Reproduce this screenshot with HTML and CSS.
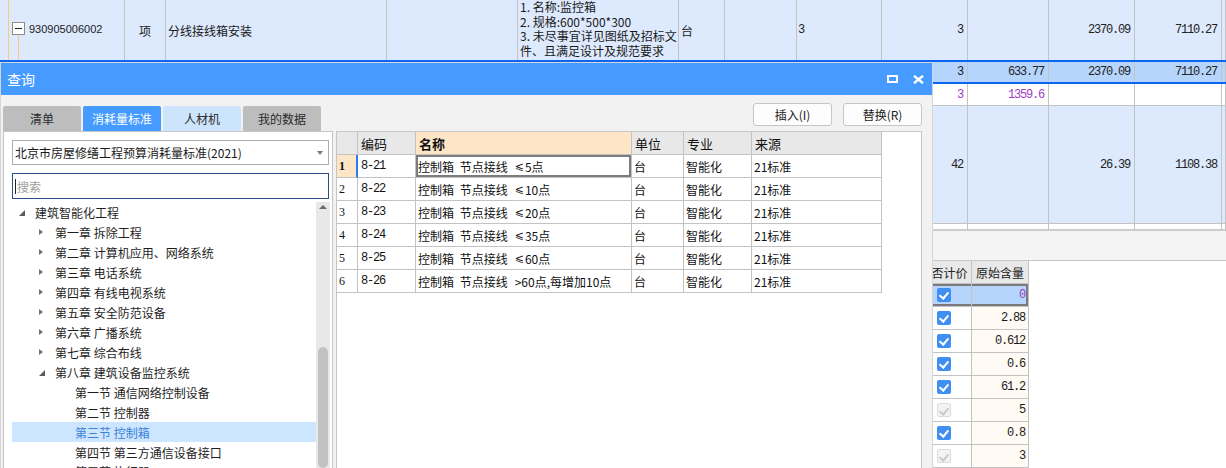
FILE: index.html
```html
<!DOCTYPE html>
<html lang="zh-CN">
<head>
<meta charset="utf-8">
<title>查询</title>
<link rel="stylesheet" href="styles.css">
</head>
<body>
<div class="app">
  <div class="mgrid">
    <div class="mrow r1">
      <div class="c c-tree"><span class="tbox"><span class="minus"></span></span><span class="code">930905006002</span></div>
      <div class="c c-center">项</div>
      <div class="c c-text">分线接线箱安装</div>
      <div class="c"></div>
      <div class="c c-desc"><div class="dl">1. 名称:监控箱</div><div class="dl">2. 规格:600*500*300</div><div class="dl">3. 未尽事宜详见图纸及招标文</div><div class="dl">件、且满足设计及规范要求</div></div>
      <div class="c c-text">台</div>
      <div class="c"></div>
      <div class="c nl">3</div>
      <div class="c n">3</div>
      <div class="c"></div>
      <div class="c n">2370.09</div>
      <div class="c n">7110.27</div>
      <div class="c"></div>
    </div>
    <div class="mrow r2">
      <div class="c"></div><div class="c"></div><div class="c"></div><div class="c"></div><div class="c"></div><div class="c"></div><div class="c"></div><div class="c"></div>
      <div class="c n">3</div>
      <div class="c n">633.77</div>
      <div class="c n">2370.09</div>
      <div class="c n">7110.27</div>
      <div class="c"></div>
    </div>
    <div class="mrow r3">
      <div class="c"></div><div class="c"></div><div class="c"></div><div class="c"></div><div class="c"></div><div class="c"></div><div class="c"></div><div class="c"></div>
      <div class="c n purple">3</div>
      <div class="c n purple">1359.6</div>
      <div class="c"></div>
      <div class="c"></div>
      <div class="c"></div>
    </div>
    <div class="mrow r4">
      <div class="c"></div><div class="c"></div><div class="c"></div><div class="c"></div><div class="c"></div><div class="c"></div><div class="c"></div><div class="c"></div>
      <div class="c n">42</div>
      <div class="c"></div>
      <div class="c n">26.39</div>
      <div class="c n">1108.38</div>
      <div class="c"></div>
    </div>
    <div class="mrow stub">
      <div class="c"></div><div class="c"></div><div class="c"></div><div class="c"></div><div class="c"></div><div class="c"></div><div class="c"></div><div class="c"></div><div class="c"></div><div class="c"></div><div class="c"></div><div class="c"></div><div class="c"></div>
    </div>
  </div>
  <div class="band"></div>
  <div class="sgrid">
    <div class="srow shead">
      <div class="s s0"></div>
      <div class="s s1">是否计价</div>
      <div class="s s2">原始含量</div>
      <div class="s s3"></div>
    </div>
    <div class="srow ssel">
      <div class="s s0"></div>
      <div class="s s1"><span class="cb on"></span></div>
      <div class="s s2 purple">0</div>
      <div class="s s3"></div>
    </div>
    <div class="srow">
      <div class="s s0"></div>
      <div class="s s1"><span class="cb on"></span></div>
      <div class="s s2">2.88</div>
      <div class="s s3"></div>
    </div>
    <div class="srow">
      <div class="s s0"></div>
      <div class="s s1"><span class="cb on"></span></div>
      <div class="s s2">0.612</div>
      <div class="s s3"></div>
    </div>
    <div class="srow">
      <div class="s s0"></div>
      <div class="s s1"><span class="cb on"></span></div>
      <div class="s s2">0.6</div>
      <div class="s s3"></div>
    </div>
    <div class="srow">
      <div class="s s0"></div>
      <div class="s s1"><span class="cb on"></span></div>
      <div class="s s2">61.2</div>
      <div class="s s3"></div>
    </div>
    <div class="srow">
      <div class="s s0"></div>
      <div class="s s1"><span class="cb off"></span></div>
      <div class="s s2">5</div>
      <div class="s s3"></div>
    </div>
    <div class="srow">
      <div class="s s0"></div>
      <div class="s s1"><span class="cb on"></span></div>
      <div class="s s2">0.8</div>
      <div class="s s3"></div>
    </div>
    <div class="srow">
      <div class="s s0"></div>
      <div class="s s1"><span class="cb off"></span></div>
      <div class="s s2">3</div>
      <div class="s s3"></div>
    </div>
  </div>
</div>

<div class="dialog">
  <div class="dlg-title">
    <span class="dlg-name">查询</span>
    <div class="dlg-ctrls">
      <svg class="ico-max" width="11" height="8" viewBox="0 0 11 8"><rect x="1" y="1" width="9" height="6" fill="none" stroke="#fff" stroke-width="2"/></svg>
      <svg class="ico-close" width="11" height="9" viewBox="0 0 11 9"><path d="M1 0.8 L10 8.2 M10 0.8 L1 8.2" stroke="#fff" stroke-width="2.4" fill="none"/></svg>
    </div>
  </div>
  <div class="dlg-body">
    <div class="lcol">
      <div class="tabs">
        <div class="tab">清单</div>
        <div class="tab active">消耗量标准</div>
        <div class="tab light">人材机</div>
        <div class="tab">我的数据</div>
      </div>
      <div class="lpanel">
        <div class="select"><span>北京市房屋修缮工程预算消耗量标准(2021)</span><i class="caret"></i></div>
        <div class="search"><span class="cursor"></span><span class="ph">搜索</span></div>
        <div class="tree-wrap">
          <div class="tree">
            <div class="node lv0"><span class="tg exp"></span>建筑智能化工程</div>
            <div class="node lv1"><span class="tg col"></span>第一章 拆除工程</div>
            <div class="node lv1"><span class="tg col"></span>第二章 计算机应用、网络系统</div>
            <div class="node lv1"><span class="tg col"></span>第三章 电话系统</div>
            <div class="node lv1"><span class="tg col"></span>第四章 有线电视系统</div>
            <div class="node lv1"><span class="tg col"></span>第五章 安全防范设备</div>
            <div class="node lv1"><span class="tg col"></span>第六章 广播系统</div>
            <div class="node lv1"><span class="tg col"></span>第七章 综合布线</div>
            <div class="node lv1"><span class="tg exp"></span>第八章 建筑设备监控系统</div>
            <div class="node lv2"><span class="tg"></span>第一节 通信网络控制设备</div>
            <div class="node lv2"><span class="tg"></span>第二节 控制器</div>
            <div class="node lv2 sel"><span class="tg"></span>第三节 控制箱</div>
            <div class="node lv2"><span class="tg"></span>第四节 第三方通信设备接口</div>
            <div class="node lv2 last"><span class="tg"></span>第五节 执行器</div>
          </div>
          <div class="vscroll"><span class="up"></span><span class="thumb"></span></div>
        </div>
      </div>
    </div>
    <div class="rcol">
      <div class="btns">
        <button class="btn">插入(I)</button>
        <button class="btn">替换(R)</button>
      </div>
      <div class="rpanel">
        <div class="qgrid">
          <div class="qrow qhead">
            <div class="q qn"></div>
            <div class="q">编码</div>
            <div class="q qsort">名称</div>
            <div class="q">单位</div>
            <div class="q">专业</div>
            <div class="q">来源</div>
          </div>
          <div class="qrow qcur">
            <div class="q qn">1</div>
            <div class="q qc">8-21</div>
            <div class="q qname qfocus">控制箱 节点接线<span class="le">⩽</span>5点</div>
            <div class="q">台</div>
            <div class="q">智能化</div>
            <div class="q">21标准</div>
          </div>
          <div class="qrow">
            <div class="q qn">2</div>
            <div class="q qc">8-22</div>
            <div class="q qname">控制箱 节点接线<span class="le">⩽</span>10点</div>
            <div class="q">台</div>
            <div class="q">智能化</div>
            <div class="q">21标准</div>
          </div>
          <div class="qrow">
            <div class="q qn">3</div>
            <div class="q qc">8-23</div>
            <div class="q qname">控制箱 节点接线<span class="le">⩽</span>20点</div>
            <div class="q">台</div>
            <div class="q">智能化</div>
            <div class="q">21标准</div>
          </div>
          <div class="qrow">
            <div class="q qn">4</div>
            <div class="q qc">8-24</div>
            <div class="q qname">控制箱 节点接线<span class="le">⩽</span>35点</div>
            <div class="q">台</div>
            <div class="q">智能化</div>
            <div class="q">21标准</div>
          </div>
          <div class="qrow">
            <div class="q qn">5</div>
            <div class="q qc">8-25</div>
            <div class="q qname">控制箱 节点接线<span class="le">⩽</span>60点</div>
            <div class="q">台</div>
            <div class="q">智能化</div>
            <div class="q">21标准</div>
          </div>
          <div class="qrow">
            <div class="q qn">6</div>
            <div class="q qc">8-26</div>
            <div class="q qname">控制箱 节点接线<span class="gt">&gt;60点,每增加10点</span></div>
            <div class="q">台</div>
            <div class="q">智能化</div>
            <div class="q">21标准</div>
          </div>
        </div>
      </div>
    </div>
  </div>
</div>
</body>
</html>
```

FILE: styles.css
```css
* { box-sizing: border-box; }
html, body { margin: 0; padding: 0; }
body {
  width: 1226px;
  height: 468px;
  overflow: hidden;
  position: relative;
  background: #fff;
  font-family: "Noto Sans CJK SC", "Liberation Sans", sans-serif;
  font-size: 12px;
  color: #1a1a1a;
}

/* ---------- background main grid ---------- */
.mrow {
  display: grid;
  grid-template-columns: 125px 41px 221px 131px 161px 46px 72px 85px 86px 81px 86px 87px 1fr;
}
.c {
  border-right: 1px solid #c3c3c3;
  display: flex;
  align-items: center;
  white-space: nowrap;
  overflow: hidden;
}
.r1 { height: 60px; background: #dde9fc; }
.r2 { height: 24px; background: #b5d5fc; border-top: 2px solid #0d63f2; border-bottom: 2px solid #0d63f2; }
.r3 { height: 22px; background: #fff; border-bottom: 1px solid #c3c3c3; }
.r4 { height: 118px; background: #dde9fc; border-bottom: 1px solid #c3c3c3; }
.stub { height: 5px; background: #fff; }

.c-tree {
  padding-left: 12px;
  background:
    linear-gradient(#ffc87e, #ffc87e) 8px 0 / 1px 100% no-repeat,
    linear-gradient(#ffc87e, #ffc87e) 18px 35px / 1px 25px no-repeat,
    #dde9fc;
}
.tbox {
  width: 13px;
  height: 13px;
  border: 1px solid #8c8c8c;
  background: #fff;
  display: flex;
  align-items: center;
  justify-content: center;
  margin-top: -3px;
}
.minus { width: 7px; height: 1px; background: #222; }
.code {
  margin-left: 4px;
  font-family: "Liberation Sans", sans-serif;
  font-size: 11px;
  margin-top: -3px;
  color: #222;
}
.c-center { justify-content: center; }
.c-text { padding-left: 2px; }
.c-desc {
  display: flex;
  flex-direction: column;
  align-items: flex-start;
  justify-content: flex-start;
  padding: 0 2px;
  font-size: 12px;
}
.dl { height: 14.5px; line-height: 14px; overflow: visible; }
.n, .nl {
  font-family: "Liberation Mono", monospace;
  font-size: 12px;
  letter-spacing: -1.2px;
  color: #222;
}
.n { justify-content: flex-end; padding-right: 4px; }
.nl { padding-left: 1px; }
.purple { color: #a03cc3; }

.band {
  height: 32px;
  background: #f4f4f4;
  border-top: 2px solid #cdcdcd;
  border-bottom: 1px solid #c8c8c8;
}

/* ---------- background sub grid ---------- */
.srow {
  display: grid;
  grid-template-columns: 916px 56px 57px 1fr;
  height: 23px;
}
.s {
  display: flex;
  align-items: center;
}
.s1, .s2 { border-right: 1px solid #c3c3c3; border-bottom: 1px solid #c3c3c3; }
.s1 { justify-content: center; }
.s2 {
  justify-content: flex-end;
  padding-right: 3px;
  background: #fffaf3;
  font-family: "Liberation Mono", monospace;
  font-size: 12px;
  letter-spacing: -1.2px;
}
.s2.purple { color: #a03cc3; }
.shead .s1, .shead .s2 {
  background: #e8e8e8;
  justify-content: center;
  padding: 0;
  font-family: "Noto Sans CJK SC", sans-serif;
  letter-spacing: 0;
  font-size: 12px;
  color: #222;
}
.ssel .s1, .ssel .s2 {
  background: #b5d5fc;
  box-shadow: inset 0 2px 0 #7a7a7a, inset 0 -2px 0 #7a7a7a;
}
.ssel .s2 { box-shadow: inset 0 2px 0 #7a7a7a, inset 0 -2px 0 #7a7a7a, inset -2px 0 0 #7a7a7a; }
.cb {
  width: 14px;
  height: 14px;
  border-radius: 2px;
  position: relative;
}
.cb.on { background: #3f8ef2; }
.cb.off { background: #f3f3f3; border: 1px solid #dcdcdc; }
.cb::after {
  content: "";
  position: absolute;
  left: 4px;
  top: 2px;
  width: 4px;
  height: 7px;
  border-right: 2px solid #fff;
  border-bottom: 2px solid #fff;
  transform: rotate(40deg);
}
.cb.off::after { left: 3.5px; top: 1.5px; border-color: #c9c9c9; }

/* ---------- dialog ---------- */
.dialog {
  position: absolute;
  left: 0;
  top: 62px;
  width: 933px;
  height: 406px;
  background: #f2f2f2;
  border: 1px solid #d6d6d6;
  border-bottom: none;
  display: flex;
  flex-direction: column;
  z-index: 5;
}
.dlg-title {
  height: 32px;
  background: #459bff;
  display: flex;
  align-items: center;
  padding: 0 8px 0 6px;
  flex: none;
}
.dlg-name { color: #fff; font-size: 14px; }
.dlg-ctrls { margin-left: auto; display: flex; align-items: center; gap: 15px; }
.ico-max, .ico-close { display: block; }

.dlg-body {
  flex: 1;
  display: flex;
  gap: 3px;
  padding: 0 10px 0 2px;
  min-height: 0;
}
.lcol {
  width: 330px;
  display: flex;
  flex-direction: column;
  padding-top: 11px;
}
.tabs { display: flex; gap: 2px; height: 25px; flex: none; }
.tab {
  width: 78px;
  height: 25px;
  background: #bdbdbd;
  color: #2a2a2a;
  display: flex;
  align-items: center;
  justify-content: center;
  font-size: 12px;
  border-radius: 2px 2px 0 0;
}
.tab.active { background: #459bff; color: #fff; }
.tab.light { background: #cce5fc; }

.lpanel {
  flex: 1;
  background: #fff;
  border: 1px solid #c6c6c6;
  border-bottom: none;
  padding: 8px 2px 0 8px;
  display: flex;
  flex-direction: column;
  min-height: 0;
}
.select {
  height: 25px;
  margin-right: 1px;
  border: 1px solid #acacac;
  display: flex;
  align-items: center;
  padding-left: 2px;
  color: #1a1a1a;
  flex: none;
}
.caret {
  margin-left: auto;
  margin-right: 5px;
  width: 0;
  height: 0;
  border-left: 3.5px solid transparent;
  border-right: 3.5px solid transparent;
  border-top: 4px solid #7a7a7a;
}
.search {
  height: 26px;
  margin-top: 8px;
  margin-right: 1px;
  border: 1px solid #2f4f86;
  display: flex;
  align-items: center;
  padding-left: 2px;
  flex: none;
}
.cursor { width: 1px; height: 15px; background: #222; }
.ph { color: #a0a0a0; margin-left: 1px; }

.tree-wrap {
  flex: 1;
  margin-top: 3px;
  display: flex;
  min-height: 0;
  overflow: hidden;
}
.tree { flex: 1; overflow: hidden; }
.node {
  height: 20px;
  display: flex;
  align-items: center;
  white-space: nowrap;
  color: #1e1e1e;
}
.node.last { height: 6px; align-items: flex-start; overflow: hidden; line-height: 20px; }
.lv0 { padding-left: 7px; }
.lv1 { padding-left: 27px; }
.lv2 { padding-left: 47px; }
.node.sel { background: #cce6ff; color: #3d80d8; }
.tg { width: 16px; height: 20px; display: flex; align-items: center; flex: none; }
.tg.col::before {
  content: "";
  width: 0;
  height: 0;
  border-left: 4px solid #707070;
  border-top: 3.5px solid transparent;
  border-bottom: 3.5px solid transparent;
}
.tg.exp::before {
  content: "";
  width: 0;
  height: 0;
  margin-top: 2px;
  border-bottom: 6px solid #5c5c5c;
  border-left: 6px solid transparent;
}
.vscroll {
  width: 14px;
  background: #e8e8e8;
  display: flex;
  flex-direction: column;
  align-items: center;
  flex: none;
}
.up {
  margin-top: 3px;
  width: 0;
  height: 0;
  border-left: 4px solid transparent;
  border-right: 4px solid transparent;
  border-bottom: 4px solid #6a6a6a;
}
.thumb {
  margin-top: 138px;
  width: 10px;
  height: 200px;
  border-radius: 5px;
  background: #c2c2c2;
}

.rcol {
  width: 586px;
  display: flex;
  flex-direction: column;
  padding-top: 8px;
}
.btns {
  display: flex;
  justify-content: flex-end;
  gap: 11px;
  height: 23px;
  margin-bottom: 5px;
  flex: none;
}
.btn {
  width: 79px;
  height: 23px;
  border: 1px solid #c6c6c6;
  border-radius: 3px;
  background: #fdfdfd;
  font-family: "Noto Sans CJK SC", sans-serif;
  font-size: 12px;
  color: #222;
  padding: 0;
}
.rpanel {
  flex: 1;
  background: #fff;
  border: 1px solid #c6c6c6;
  border-bottom: none;
  min-height: 0;
}
.qrow {
  display: grid;
  grid-template-columns: 21px 58px 216px 52px 68px 130px;
  height: 23px;
  width: 545px;
}
.q {
  border-right: 1px solid #c3c3c3;
  border-bottom: 1px solid #c3c3c3;
  display: flex;
  align-items: center;
  padding-left: 2px;
  white-space: nowrap;
  color: #111;
}
.qname { word-spacing: 3px; }
.qhead .q { background: #e8e8e8; font-size: 13px; padding-left: 3px; }
.qhead .q.qsort { background: #fde5c6; font-weight: bold; }
.qn {
  font-family: "Liberation Serif", serif;
  font-size: 12px;
  padding-left: 2px;
}
.qcur .qn { background: #fde5c6; font-weight: bold; border-right: 2px solid #2a7cf6; }
.qc {
  font-family: "Liberation Mono", monospace;
  letter-spacing: -1.2px;
  padding-left: 3px;
}
.qfocus { box-shadow: inset 0 0 0 2px #7c7c7c; }
.le { font-family: "DejaVu Sans", sans-serif; font-size: 11px; margin-left: 7px; margin-right: 1px; }
.gt { margin-left: 7px; word-spacing: 0; }
```
